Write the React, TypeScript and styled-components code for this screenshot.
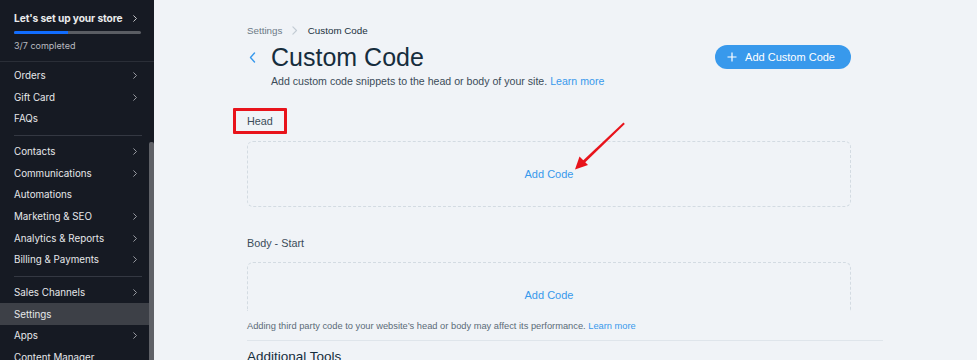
import React from "react";
import styled, { createGlobalStyle } from "styled-components";

const Global = createGlobalStyle`
  html, body { margin: 0; padding: 0; }
  body { background: #f0f3f7; overflow: hidden; }
  * { box-sizing: border-box; }
`;

const Page = styled.div`
  display: flex;
  width: 977px;
  height: 360px;
  overflow: hidden;
  font-family: "Liberation Sans", Arial, sans-serif;
`;

/* ---------- Sidebar ---------- */
const Sidebar = styled.aside`
  position: relative;
  flex: 0 0 154px;
  width: 154px;
  height: 360px;
  background: #161a23;
  color: #e9eaec;
  font-family: Inter, "Noto Sans", sans-serif;
  overflow: hidden;
`;

const SetupBlock = styled.div`
  padding: 10px 17px 0 14px;
  height: 62px;
  border-bottom: 1px solid #2a2e37;
`;

const SetupTitleRow = styled.div`
  display: flex;
  align-items: center;
  justify-content: space-between;
  height: 16px;
  font-size: 10.2px;
  font-weight: 700;
  letter-spacing: -0.1px;
`;

const Progress = styled.div`
  margin-top: 5px;
  height: 3px;
  width: 127px;
  background: #5a5d63;
  border-radius: 2px;
  overflow: hidden;
`;

const ProgressFill = styled.div`
  height: 100%;
  background: #116dff;
`;

const SetupMeta = styled.div`
  margin-top: 6px;
  font-size: 9px;
  line-height: 12px;
  color: #b9bbc0;
`;

const NavList = styled.nav`
  padding-top: 3px;
`;

const NavItem = styled.div<{ $active?: boolean }>`
  display: flex;
  align-items: center;
  justify-content: space-between;
  height: 21.6px;
  padding: 0 17px 0 14px;
  font-size: 9.8px;
  color: #e6e7ea;
  background: ${(p) => (p.$active ? "#3d4047" : "transparent")};
`;

const NavDivider = styled.div`
  height: 1px;
  margin: 5px 12px 5.2px 14px;
  background: #343842;
`;

const ScrollThumb = styled.div`
  position: absolute;
  right: 0;
  top: 142px;
  width: 5px;
  bottom: 0;
  background: #5f6167;
  border-radius: 2px 2px 0 0;
`;

const Chevron = ({ color = "#a5a7ad", size = 7 }: { color?: string; size?: number }) => (
  <svg width={size * 0.6} height={size} viewBox="0 0 6 10" fill="none">
    <path d="M1 1l4 4-4 4" stroke={color} strokeWidth="1.3" strokeLinecap="round" strokeLinejoin="round" />
  </svg>
);

/* ---------- Main ---------- */
const Main = styled.main`
  position: relative;
  flex: 1;
  height: 360px;
  padding: 23px 0 0 93px;
  background: #f0f3f7;
  color: #162d3d;
`;

const Column = styled.div`
  width: 604px;
  display: flex;
  flex-direction: column;
`;

const Breadcrumb = styled.div`
  display: flex;
  align-items: center;
  gap: 10px;
  height: 14px;
  font-size: 9.8px;
`;

const Crumb = styled.span<{ $current?: boolean }>`
  color: ${(p) => (p.$current ? "#20303c" : "#6c7a86")};
`;

const HeaderRow = styled.div`
  display: flex;
  align-items: center;
  justify-content: space-between;
  height: 30px;
  margin-top: 5px;
`;

const TitleWrap = styled.div`
  display: flex;
  align-items: center;
`;

const BackButton = styled.span`
  display: flex;
  align-items: center;
  width: 24px;
  padding-left: 2px;
`;

const Title = styled.h1`
  margin: 0;
  font-size: 25px;
  font-weight: 400;
  line-height: 30px;
  color: #162d3d;
`;

const PrimaryButton = styled.button`
  display: flex;
  align-items: center;
  gap: 8px;
  height: 24px;
  padding: 0 16px 0 12px;
  border: none;
  border-radius: 12px;
  background: #3899ec;
  color: #fff;
  font-family: "Liberation Sans", Arial, sans-serif;
  font-size: 11px;
`;

const Subtitle = styled.p`
  margin: 2px 0 0 24px;
  font-size: 10.6px;
  line-height: 14px;
  color: #3b4c59;
`;

const Link = styled.span`
  color: #3899ec;
`;

const SectionLabel = styled.div<{ $top: number }>`
  position: relative;
  margin-top: ${(p) => p.$top}px;
  height: 14px;
  font-size: 10.8px;
  line-height: 14px;
  color: #3b4c59;
`;

const Highlight = styled.span`
  position: absolute;
  left: -14px;
  top: -6px;
  width: 54px;
  height: 26px;
  border: 3px solid #e8131b;
  border-radius: 1px;
`;

const CodeBox = styled.div<{ $open?: boolean; $height: number; $top: number }>`
  margin-top: ${(p) => p.$top}px;
  height: ${(p) => p.$height}px;
  border: 1px dashed #d3dbe2;
  border-bottom-style: ${(p) => (p.$open ? "none" : "dashed")};
  border-radius: ${(p) => (p.$open ? "6px 6px 0 0" : "6px")};
  display: flex;
  justify-content: center;
  padding-top: 25px;
`;

const AddCode = styled.span`
  font-size: 11px;
  line-height: 14px;
  color: #3899ec;
`;

const Note = styled.p`
  margin: 8px 0 0;
  font-size: 9.3px;
  line-height: 14px;
  color: #5b6b78;
  white-space: nowrap;
`;

const Rule = styled.hr`
  margin: 7px 0 0;
  width: 636px;
  border: none;
  height: 1px;
  background: #dfe5eb;
`;

const SubHeading = styled.h2`
  margin: 8px 0 0;
  font-size: 13.5px;
  font-weight: 400;
  line-height: 16px;
  color: #162d3d;
`;

const ArrowLayer = styled.svg`
  position: absolute;
  left: 0;
  top: 0;
  width: 100%;
  height: 100%;
  pointer-events: none;
`;

const groups = [
  [
    { label: "Orders", arrow: true },
    { label: "Gift Card", arrow: true },
    { label: "FAQs" },
  ],
  [
    { label: "Contacts", arrow: true },
    { label: "Communications", arrow: true },
    { label: "Automations" },
    { label: "Marketing & SEO", arrow: true },
    { label: "Analytics & Reports", arrow: true },
    { label: "Billing & Payments", arrow: true },
  ],
  [
    { label: "Sales Channels", arrow: true },
    { label: "Settings", active: true },
    { label: "Apps", arrow: true },
    { label: "Content Manager" },
  ],
];

export default function App() {
  return (
    <>
      <Global />
      <Page>
        <Sidebar>
          <SetupBlock>
            <SetupTitleRow>
              <span>Let's set up your store</span>
              <Chevron color="#d6d7da" />
            </SetupTitleRow>
            <Progress>
              <ProgressFill style={{ width: `${(3 / 7) * 100}%` }} />
            </Progress>
            <SetupMeta>3/7 completed</SetupMeta>
          </SetupBlock>
          <NavList>
            {groups.map((g, gi) => (
              <React.Fragment key={gi}>
                {gi > 0 && <NavDivider />}
                {g.map((it: { label: string; arrow?: boolean; active?: boolean }) => (
                  <NavItem key={it.label} $active={it.active}>
                    <span>{it.label}</span>
                    {it.arrow && <Chevron />}
                  </NavItem>
                ))}
              </React.Fragment>
            ))}
          </NavList>
          <ScrollThumb />
        </Sidebar>

        <Main>
          <Column>
            <Breadcrumb>
              <Crumb>Settings</Crumb>
              <Chevron color="#c3ccd4" size={9} />
              <Crumb $current>Custom Code</Crumb>
            </Breadcrumb>
            <HeaderRow>
              <TitleWrap>
                <BackButton>
                  <svg width="7" height="11" viewBox="0 0 7 11" fill="none">
                    <path d="M5.5 1L1.5 5.5l4 4.5" stroke="#3899ec" strokeWidth="1.4" strokeLinecap="round" strokeLinejoin="round" />
                  </svg>
                </BackButton>
                <Title>Custom Code</Title>
              </TitleWrap>
              <PrimaryButton>
                <svg width="10" height="10" viewBox="0 0 10 10">
                  <path d="M5 0.5v9M0.5 5h9" stroke="#fff" strokeWidth="1.2" />
                </svg>
                Add Custom Code
              </PrimaryButton>
            </HeaderRow>
            <Subtitle>
              Add custom code snippets to the head or body of your site. <Link>Learn more</Link>
            </Subtitle>

            <SectionLabel $top={26}>
              <Highlight />
              Head
            </SectionLabel>
            <CodeBox $top={13} $height={66}>
              <AddCode>Add Code</AddCode>
            </CodeBox>

            <SectionLabel $top={29}>Body - Start</SectionLabel>
            <CodeBox $top={12} $height={49} $open>
              <AddCode>Add Code</AddCode>
            </CodeBox>

            <Note>
              Adding third party code to your website’s head or body may affect its performance. <Link>Learn more</Link>
            </Note>
            <Rule />
            <SubHeading>Additional Tools</SubHeading>
          </Column>

          <ArrowLayer>
            <polygon points="469.5,122.5 470.8,124 430.5,163 428.5,161" fill="#e8131b" />
            <polygon points="421,169.5 425.5,156.5 434,165" fill="#e8131b" />
          </ArrowLayer>
        </Main>
      </Page>
    </>
  );
}
